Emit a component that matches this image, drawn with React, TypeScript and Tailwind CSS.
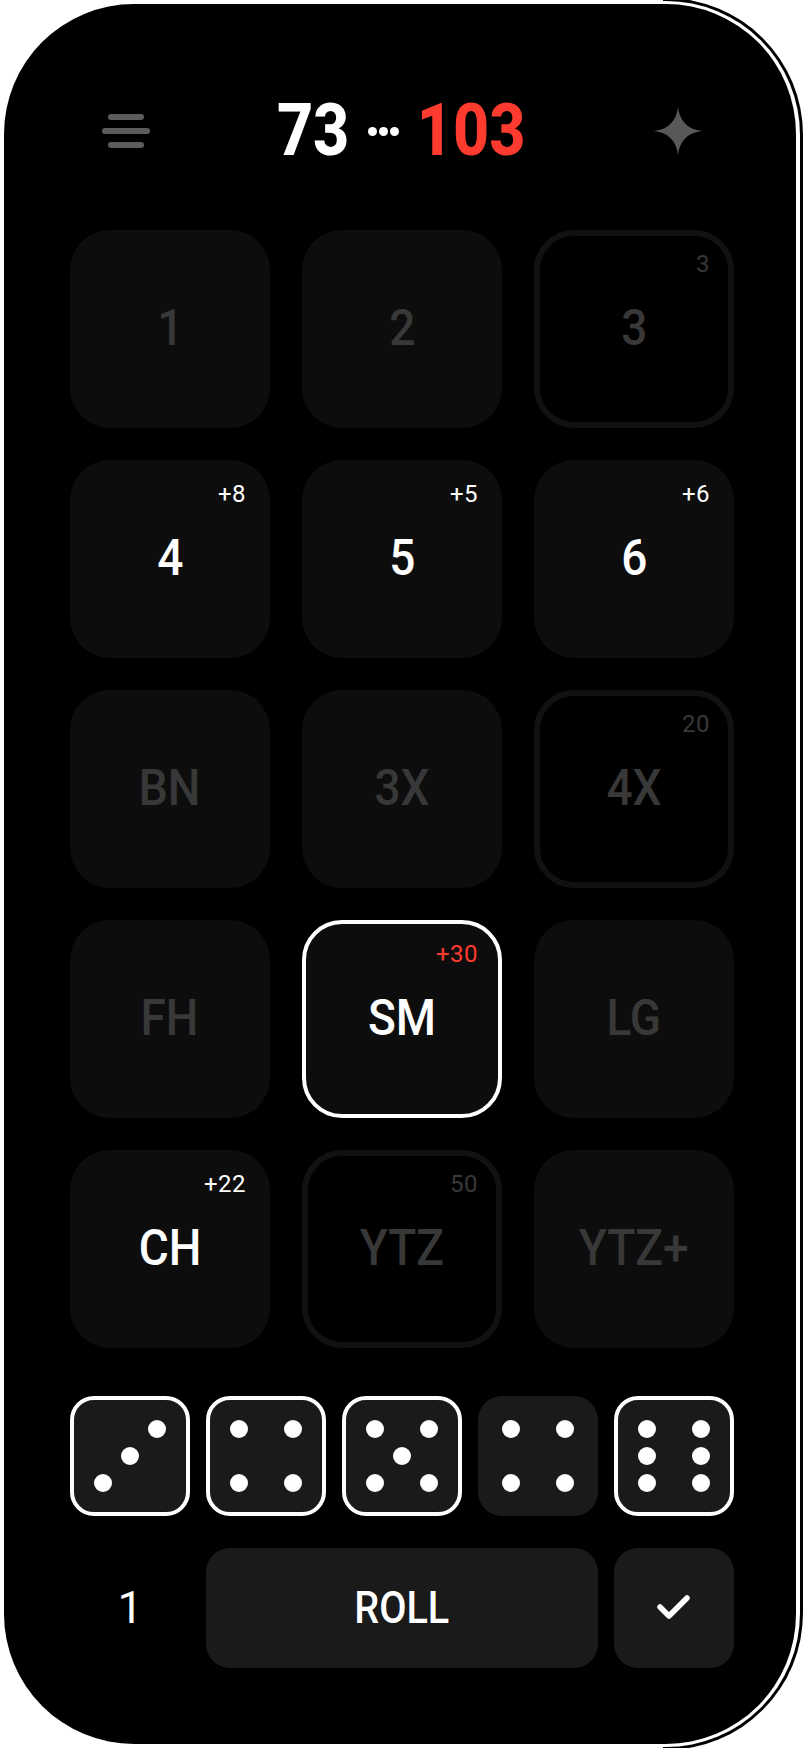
import React from 'react';

type Tile = {
    label: string;
    badge?: string;
    state: 'off' | 'live' | 'scored' | 'picked';
};

const tiles: Tile[] = [
    { label: '1', state: 'off' },
    { label: '2', state: 'off' },
    { label: '3', badge: '3', state: 'scored' },
    { label: '4', badge: '+8', state: 'live' },
    { label: '5', badge: '+5', state: 'live' },
    { label: '6', badge: '+6', state: 'live' },
    { label: 'BN', state: 'off' },
    { label: '3X', state: 'off' },
    { label: '4X', badge: '20', state: 'scored' },
    { label: 'FH', state: 'off' },
    { label: 'SM', badge: '+30', state: 'picked' },
    { label: 'LG', state: 'off' },
    { label: 'CH', badge: '+22', state: 'live' },
    { label: 'YTZ', badge: '50', state: 'scored' },
    { label: 'YTZ+', state: 'off' },
];

const dice = [
    { pips: [[87, 33], [60, 60], [33, 87]], held: true },
    { pips: [[33, 33], [87, 33], [33, 87], [87, 87]], held: true },
    { pips: [[33, 33], [87, 33], [60, 60], [33, 87], [87, 87]], held: true },
    { pips: [[33, 33], [87, 33], [33, 87], [87, 87]], held: false },
    { pips: [[33, 33], [87, 33], [33, 60], [87, 60], [33, 87], [87, 87]], held: true },
];

function ScoreTile({ tile }: { tile: Tile }) {
    const boxClass = {
        off: 'bg-[#0d0d0d]',
        live: 'bg-[#0d0d0d]',
        scored: 'bg-black outline-[6px] -outline-offset-[6px] outline-[#111111]',
        picked: 'bg-[#0d0d0d] outline-4 -outline-offset-4 outline-white',
    }[tile.state];
    const labelClass = tile.state === 'off' || tile.state === 'scored' ? 'text-[#383838]' : 'text-white';
    const badgeClass = {
        off: 'text-[#383838]',
        live: 'text-white',
        scored: 'text-[#383838]',
        picked: 'text-[#ff3b30]',
    }[tile.state];

    return (
        <div className={`relative h-[198px] flex items-center justify-center rounded-[40px] ${boxClass}`}>
            <span className={`text-[50px] leading-none font-medium scale-x-[0.92] -translate-y-[1px] ${labelClass}`}>{tile.label}</span>
            {tile.badge && (
                <span className={`absolute top-[19px] right-[24px] text-[24px] leading-[30px] tracking-[0.5px] ${badgeClass}`}>
                    {tile.badge}
                </span>
            )}
        </div>
    );
}

function Die({ pips, held }: { pips: number[][]; held: boolean }) {
    return (
        <div className={`relative w-[120px] h-[120px] rounded-[24px] bg-[#1a1a1a] ${held ? 'outline-4 -outline-offset-4 outline-white' : ''}`}>
            <svg width="120" height="120" viewBox="0 0 120 120" className="block">
                {pips.map(([x, y]) => (
                    <circle key={`${x}-${y}`} cx={x} cy={y} r="9" fill="#ffffff" />
                ))}
            </svg>
        </div>
    );
}

export default function App() {
    return (
        <div className="relative w-[804px] h-[1748px] overflow-hidden bg-white font-['Roboto','Liberation_Sans',sans-serif]">
            {/* double edge on the right side of the phone */}
            <div className="absolute left-[663px] top-[-2px] bottom-[-2px] right-[1px] rounded-r-[137px] bg-black" />
            <div className="absolute left-[400px] top-[1px] bottom-[1px] right-[4px] rounded-r-[134px] bg-white" />

            <div className="absolute left-[4px] top-[4px] w-[792px] h-[1740px] rounded-[130px] bg-black pl-[66px] pr-[62px]">
                {/* header */}
                <div className="h-[226px] flex items-start">
                    <svg width="48" height="34" viewBox="0 0 48 34" className="mt-[110px] ml-[32px]">
                        <rect x="6" y="0" width="36" height="6" rx="3" fill="#5c5c5c" />
                        <rect x="0" y="14" width="48" height="6" rx="3" fill="#5c5c5c" />
                        <rect x="6" y="28" width="36" height="6" rx="3" fill="#5c5c5c" />
                    </svg>
                    <div className="ml-[126px] mt-[84px] flex items-center font-extrabold text-[73px] leading-[84px]">
                        <span className="w-[74px] flex justify-center text-white">
                            <span className="scale-x-[0.86]">73</span>
                        </span>
                        <span className="flex gap-[2px] mx-[18px] mt-[2px]">
                            <span className="w-[9px] h-[9px] rounded-full bg-white" />
                            <span className="w-[9px] h-[9px] rounded-full bg-white" />
                            <span className="w-[9px] h-[9px] rounded-full bg-white" />
                        </span>
                        <span className="w-[108px] flex justify-center text-[#ff3b30]">
                            <span className="scale-x-[0.86]">103</span>
                        </span>
                    </div>
                    <svg width="48" height="48" viewBox="0 0 48 48" className="ml-auto mr-[32px] mt-[103px]">
                        <path d="M24 0 C25.5 13 33 22.5 48 24 C33 25.5 25.5 35 24 48 C22.5 35 15 25.5 0 24 C15 22.5 22.5 13 24 0 Z" fill="#585858" />
                    </svg>
                </div>

                {/* score grid */}
                <div className="grid grid-cols-3 gap-x-[32px] gap-y-[32px]">
                    {tiles.map((tile) => (
                        <ScoreTile key={tile.label} tile={tile} />
                    ))}
                </div>

                {/* dice */}
                <div className="mt-[48px] flex gap-[16px]">
                    {dice.map((die, i) => (
                        <Die key={i} pips={die.pips} held={die.held} />
                    ))}
                </div>

                {/* actions */}
                <div className="mt-[32px] flex gap-[16px] h-[120px]">
                    <div className="w-[120px] flex items-center justify-center text-white text-[44px] leading-none">1</div>
                    <div className="flex-1 flex items-center justify-center rounded-[24px] bg-[#1a1a1a] text-white text-[44px] leading-none font-medium">
                        <span className="scale-x-[0.9]">ROLL</span>
                    </div>
                    <div className="w-[120px] flex items-center justify-center rounded-[24px] bg-[#1a1a1a]">
                        <svg width="40" height="32" viewBox="0 0 40 32">
                            <path d="M6 15 L15 24 L33 6" fill="none" stroke="#ffffff" strokeWidth="5.5" strokeLinecap="round" strokeLinejoin="round" />
                        </svg>
                    </div>
                </div>
            </div>
        </div>
    );
}
